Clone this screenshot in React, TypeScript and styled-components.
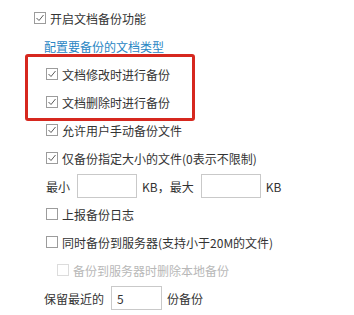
import React from "react";
import styled, { createGlobalStyle } from "styled-components";

const GlobalStyle = createGlobalStyle`
  html, body {
    margin: 0;
    padding: 0;
    background: #ffffff;
  }
  body {
    font-family: "Noto Sans CJK SC", "Noto Sans", sans-serif;
  }
`;

type IndentProps = { $indent: number; $disabled?: boolean };

const Panel = styled.div`
  width: 354px;
  height: 315px;
  padding-top: 4px;
  box-sizing: border-box;
  display: flex;
  flex-direction: column;
  overflow: hidden;
`;

const Row = styled.div<IndentProps>`
  display: flex;
  align-items: center;
  height: 28px;
  padding-left: ${(p) => p.$indent}px;
  font-size: 12px;
  color: ${(p) => (p.$disabled ? "#b8b8b8" : "#333333")};
  white-space: nowrap;
`;

const LinkText = styled.a`
  color: #2a86c4;
  text-decoration: underline;
  text-underline-offset: 2px;
  cursor: pointer;
`;

const Group = styled.div`
  position: relative;
`;

// red annotation rectangle drawn over the screenshot
const Highlight = styled.div`
  position: absolute;
  top: -6px;
  left: 25px;
  width: 170px;
  height: 67px;
  box-sizing: border-box;
  border: 3px solid #d6281f;
  border-radius: 3px;
  pointer-events: none;
`;

const Box = styled.span<{ $disabled?: boolean }>`
  display: inline-flex;
  align-items: center;
  justify-content: center;
  width: 12px;
  height: 12px;
  box-sizing: border-box;
  margin-right: 4px;
  border: 1px solid ${(p) => (p.$disabled ? "#dcdcdc" : "#9c9c9c")};
  background: #fff;
  flex-shrink: 0;
`;

const Field = styled.input`
  width: ${(p) => p.width}px;
  height: 24px;
  box-sizing: border-box;
  margin: 0 5px 0 7px;
  padding: 0 5px;
  border: 1px solid #c9c9c9;
  font-family: inherit;
  font-size: 12px;
  color: #333;
  outline: none;
`;

const Check: React.FC<{ checked?: boolean; disabled?: boolean }> = ({
  checked,
  disabled,
}) => (
  <Box $disabled={disabled}>
    {checked && (
      <svg width="10" height="10" viewBox="0 0 10 10">
        <polyline
          points="1.5,5 4,7.5 8.5,2"
          fill="none"
          stroke="#5a5a5a"
          strokeWidth="1"
        />
      </svg>
    )}
  </Box>
);

const App: React.FC = () => {
  return (
    <>
      <GlobalStyle />
      <Panel>
        <Row $indent={34}>
          <Check checked />
          开启文档备份功能
        </Row>
        <Row $indent={44}>
          <LinkText>配置要备份的文档类型</LinkText>
        </Row>
        <Group>
          <Highlight />
          <Row $indent={46}>
            <Check checked />
            文档修改时进行备份
          </Row>
          <Row $indent={46}>
            <Check checked />
            文档删除时进行备份
          </Row>
        </Group>
        <Row $indent={46}>
          <Check checked />
          允许用户手动备份文件
        </Row>
        <Row $indent={46}>
          <Check checked />
          仅备份指定大小的文件(0表示不限制)
        </Row>
        <Row $indent={46}>
          最小
          <Field width={60} />
          KB，最大
          <Field width={60} />
          KB
        </Row>
        <Row $indent={46}>
          <Check />
          上报备份日志
        </Row>
        <Row $indent={46}>
          <Check />
          同时备份到服务器(支持小于20M的文件)
        </Row>
        <Row $indent={57} $disabled>
          <Check disabled />
          备份到服务器时删除本地备份
        </Row>
        <Row $indent={44}>
          保留最近的
          <Field width={51} defaultValue="5" />
          份备份
        </Row>
      </Panel>
    </>
  );
};

export default App;
